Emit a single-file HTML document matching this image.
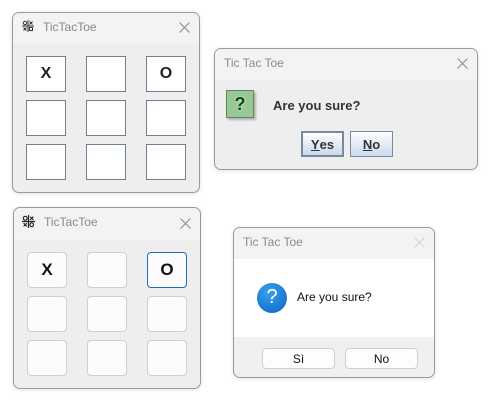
<!DOCTYPE html>
<html><head><meta charset="utf-8"><style>
*{margin:0;padding:0;box-sizing:border-box}
body{width:490px;height:400px;background:#fff;position:relative;overflow:hidden;font-family:"Segoe UI","Liberation Sans",sans-serif}
.a{position:absolute}
.win{position:absolute;border:1px solid #9a9a9a;border-radius:7px;background:#eeeeee;overflow:hidden;box-shadow:0 1px 4px rgba(0,0,0,.12)}
.tb{position:absolute;left:0;top:0;right:0;background:#f3f3f3}
.tt{position:absolute;font-size:12px;color:#8a8a8a}
.x{position:absolute}
.c1{position:absolute;width:40px;height:36px;background:#fff;border:1px solid #6f7f8f;font:bold 16px "Liberation Sans",sans-serif;color:#222;display:flex;align-items:center;justify-content:center}
.c2{position:absolute;width:40px;height:36px;background:#fcfcfc;border:1px solid #cfcfcf;border-radius:4px;font:bold 17px "Liberation Sans",sans-serif;color:#111;display:flex;align-items:center;justify-content:center}
.jb{position:absolute;height:26px;background:linear-gradient(#fdfeff,#c9d9ee);font:bold 13px "Liberation Sans",sans-serif;color:#333;display:flex;align-items:center;justify-content:center}
.wb{position:absolute;height:21px;width:73px;background:#fdfdfd;border:1px solid #cfcfcf;border-radius:4px;font-size:12px;color:#111;display:flex;align-items:center;justify-content:center}
</style></head><body>

<!-- Window 1 -->
<div class="win" style="left:12px;top:12px;width:188px;height:181px">
 <div class="tb" style="height:31px"></div>
 <svg class="a" style="left:9px;top:7px" width="12" height="12" viewBox="0 0 12 12" stroke="#333" fill="none" stroke-width="1"><path d="M6 0V12M0 6H12"/><circle cx="3" cy="3" r="1.7"/><path d="M7.5 1.5l3 3M10.5 1.5l-3 3M1.5 7.5l3 3M4.5 7.5l-3 3"/><rect x="7.5" y="7.5" width="3" height="3"/></svg>
 <div class="tt" style="left:30px;top:7px">TicTacToe</div>
 <svg class="x" style="left:166px;top:9px" width="11" height="11" stroke="#888" stroke-width="1"><path d="M0.5 0.5L10.5 10.5M10.5 0.5L0.5 10.5"/></svg>
 <div class="c1" style="left:13px;top:43px">X</div><div class="c1" style="left:73px;top:43px"></div><div class="c1" style="left:133px;top:43px">O</div>
 <div class="c1" style="left:13px;top:87px"></div><div class="c1" style="left:73px;top:87px"></div><div class="c1" style="left:133px;top:87px"></div>
 <div class="c1" style="left:13px;top:131px"></div><div class="c1" style="left:73px;top:131px"></div><div class="c1" style="left:133px;top:131px"></div>
</div>

<!-- Dialog 1 -->
<div class="win" style="left:214px;top:48px;width:264px;height:122px">
 <div class="tb" style="height:31px"></div>
 <div class="tt" style="left:9px;top:7px">Tic Tac Toe</div>
 <svg class="x" style="left:242px;top:9px" width="11" height="11" stroke="#888" stroke-width="1"><path d="M0.5 0.5L10.5 10.5M10.5 0.5L0.5 10.5"/></svg>
 <div class="a" style="left:11px;top:41px;width:28px;height:28px;background:#98c898;border:1px solid #5a8a5a;box-shadow:2px 2px 2px rgba(0,0,0,.25);font:bold 18px 'Liberation Sans',sans-serif;color:#0a4a0a;text-align:center;line-height:26px;text-shadow:0 0 2px #fff">?</div>
 <div class="a" style="left:58px;top:49px;font:bold 13px 'Liberation Sans',sans-serif;color:#333">Are you sure?</div>
 <div class="jb" style="left:86px;top:82px;width:43px;border:2px solid #7a8a9a"><u>Y</u>es</div>
 <div class="jb" style="left:135px;top:82px;width:43px;border:1px solid #7a8a9a"><u>N</u>o</div>
</div>

<!-- Window 2 -->
<div class="win" style="left:13px;top:207px;width:188px;height:182px">
 <div class="tb" style="height:32px"></div>
 <svg class="a" style="left:8px;top:7px" width="13" height="13" viewBox="0 0 12 12" stroke="#222" fill="none" stroke-width="1.1"><path d="M6 0V12M0 6H12"/><circle cx="3" cy="3" r="1.8"/><path d="M7.5 1.5l3 3M10.5 1.5l-3 3M1.5 7.5l3 3M4.5 7.5l-3 3"/><ellipse cx="9" cy="9" rx="1.6" ry="1.8"/></svg>
 <div class="tt" style="left:30px;top:7px">TicTacToe</div>
 <svg class="x" style="left:166px;top:10px" width="11" height="11" stroke="#888" stroke-width="1"><path d="M0.5 0.5L10.5 10.5M10.5 0.5L0.5 10.5"/></svg>
 <div class="c2" style="left:13px;top:44px">X</div><div class="c2" style="left:73px;top:44px"></div><div class="c2" style="left:133px;top:44px;border-color:#1a6fc4">O</div>
 <div class="c2" style="left:13px;top:88px"></div><div class="c2" style="left:73px;top:88px"></div><div class="c2" style="left:133px;top:88px"></div>
 <div class="c2" style="left:13px;top:132px"></div><div class="c2" style="left:73px;top:132px"></div><div class="c2" style="left:133px;top:132px"></div>
</div>

<!-- Dialog 2 -->
<div class="win" style="left:233px;top:227px;width:202px;height:151px;background:#f0f0f0">
 <div class="tb" style="height:31px"></div>
 <div class="a" style="left:0;top:31px;width:202px;height:78px;background:#fff"></div>
 <div class="tt" style="left:9px;top:7px">Tic Tac Toe</div>
 <svg class="x" style="left:180px;top:9px" width="11" height="11" stroke="#d0d0d0" stroke-width="1"><path d="M0.5 0.5L10.5 10.5M10.5 0.5L0.5 10.5"/></svg>
 <div class="a" style="left:23px;top:55px;width:30px;height:30px;border-radius:50%;background:radial-gradient(circle at 40% 30%,#3aa0ee,#0a64c0);color:#fff;font-size:20px;text-align:center;line-height:29px">?</div>
 <div class="a" style="left:63px;top:62px;font-size:12px;color:#111">Are you sure?</div>
 <div class="wb" style="left:28px;top:120px">Sì</div>
 <div class="wb" style="left:111px;top:120px">No</div>
</div>
</body></html>
